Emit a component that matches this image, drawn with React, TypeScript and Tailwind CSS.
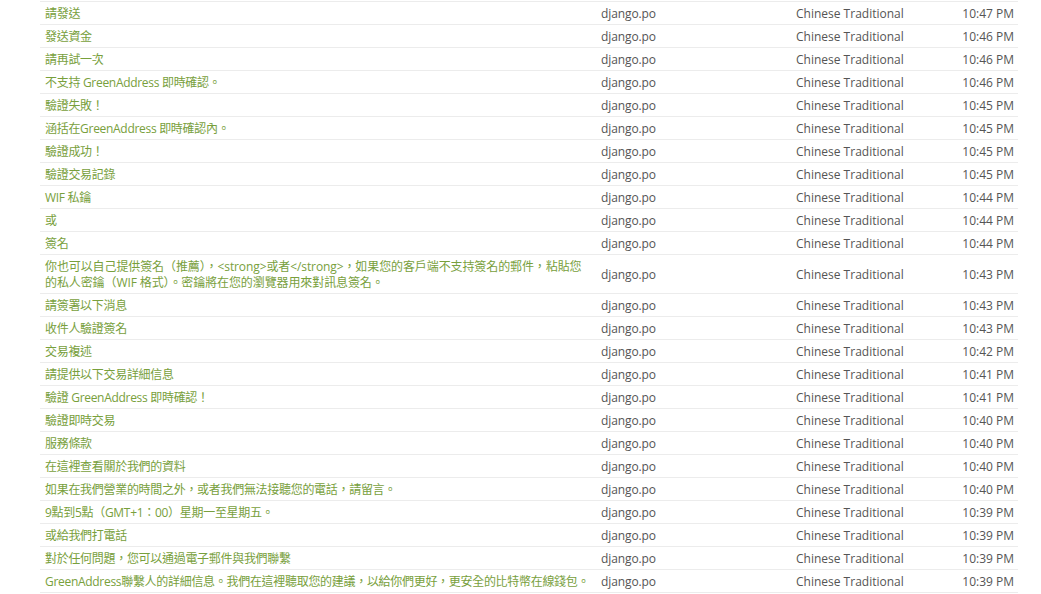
import React from "react";

type Row = { text: React.ReactNode; time: string; tall?: boolean };

const rows: Row[] = [
  { text: "請發送", time: "10:47 PM" },
  { text: "發送資金", time: "10:46 PM" },
  { text: "請再試一次", time: "10:46 PM" },
  { text: "不支持 GreenAddress 即時確認。", time: "10:46 PM" },
  { text: "驗證失敗！", time: "10:45 PM" },
  { text: "涵括在GreenAddress 即時確認內。", time: "10:45 PM" },
  { text: "驗證成功！", time: "10:45 PM" },
  { text: "驗證交易記錄", time: "10:45 PM" },
  { text: "WIF 私鑰", time: "10:44 PM" },
  { text: "或", time: "10:44 PM" },
  { text: "簽名", time: "10:44 PM" },
  {
    text: (
      <>
        你也可以自己提供簽名（推薦），&lt;strong&gt;或者&lt;/strong&gt;，如果您的客戶端不支持簽名的郵件，粘貼您
        <br />
        的私人密鑰（WIF 格式）。密鑰將在您的瀏覽器用來對訊息簽名。
      </>
    ),
    time: "10:43 PM",
    tall: true,
  },
  { text: "請簽署以下消息", time: "10:43 PM" },
  { text: "收件人驗證簽名", time: "10:43 PM" },
  { text: "交易複述", time: "10:42 PM" },
  { text: "請提供以下交易詳細信息", time: "10:41 PM" },
  { text: "驗證 GreenAddress 即時確認！", time: "10:41 PM" },
  { text: "驗證即時交易", time: "10:40 PM" },
  { text: "服務條款", time: "10:40 PM" },
  { text: "在這裡查看關於我們的資料", time: "10:40 PM" },
  { text: "如果在我們營業的時間之外，或者我們無法接聽您的電話，請留言。", time: "10:40 PM" },
  { text: "9點到5點（GMT+1：00）星期一至星期五。", time: "10:39 PM" },
  { text: "或給我們打電話", time: "10:39 PM" },
  { text: "對於任何問題，您可以通過電子郵件與我們聯繫", time: "10:39 PM" },
  {
    text: "GreenAddress聯繫人的詳細信息。我們在這裡聽取您的建議，以給你們更好，更安全的比特幣在線錢包。",
    time: "10:39 PM",
  },
];

export default function App() {
  return (
    <div
      className="w-[1041px] h-[594px] bg-white overflow-hidden pt-[1px] text-[12px]"
      style={{ fontFamily: '"Open Sans", "Noto Sans CJK TC", sans-serif' }}
    >
      <div className="ml-[40px] w-[978px] border-b border-[#ececec]">
        {rows.map((r, i) => (
          <div
            key={i}
            className={`flex border-t border-[#ececec] leading-[16px] pt-[4px] pb-[2px] ${r.tall ? "items-center" : ""}`}
          >
            <div
              className={`w-[556px] pl-[5px] pr-[4px] text-[#78a03c] whitespace-nowrap ${r.tall ? "tracking-[-0.1px]" : "tracking-[-0.3px]"}`}
            >
              {r.text}
            </div>
            <div className="w-[195px] pl-[5px] text-[#555555] tracking-[-0.1px]">django.po</div>
            <div className="flex-1 pl-[5px] text-[#555555]">Chinese Traditional</div>
            <div className="pr-[4px] text-right text-[#555555]">{r.time}</div>
          </div>
        ))}
      </div>
    </div>
  );
}
